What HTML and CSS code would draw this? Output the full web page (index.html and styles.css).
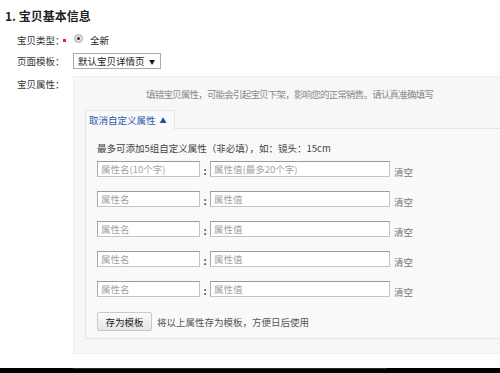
FILE: index.html
```html
<!DOCTYPE html>
<html lang="zh-CN">
<head>
<meta charset="utf-8">
<title>宝贝基本信息</title>
<link rel="stylesheet" href="styles.css">
</head>
<body>
<div class="page">
  <h1 class="title">1. 宝贝基本信息</h1>
  <div class="row row-type">
    <span class="label">宝贝类型：</span>
    <span class="req"></span>
    <span class="radio"><span class="radio-dot"></span></span>
    <span class="radio-text">全新</span>
  </div>
  <div class="row row-tpl">
    <span class="label">页面模板：</span>
    <span class="select"><span class="select-text">默认宝贝详情页</span><span class="select-arrow">▼</span></span>
  </div>
  <div class="row row-attr">
    <span class="label label-top">宝贝属性：</span>
    <div class="attr-box">
      <p class="warn">填错宝贝属性，可能会引起宝贝下架，影响您的正常销售。请认真准确填写</p>
      <div class="tab"><span class="tab-link">取消自定义属性</span><span class="tab-arrow">▲</span></div>
      <div class="custom">
        <p class="hint">最多可添加5组自定义属性（非必填），如：镜头：15cm</p>
        <div class="pair">
          <span class="inp inp-name">属性名(10个字)</span><span class="colon">:</span><span class="inp inp-val">属性值(最多20个字)</span><span class="clear">清空</span>
        </div>
        <div class="pair">
          <span class="inp inp-name">属性名</span><span class="colon">:</span><span class="inp inp-val">属性值</span><span class="clear">清空</span>
        </div>
        <div class="pair">
          <span class="inp inp-name">属性名</span><span class="colon">:</span><span class="inp inp-val">属性值</span><span class="clear">清空</span>
        </div>
        <div class="pair">
          <span class="inp inp-name">属性名</span><span class="colon">:</span><span class="inp inp-val">属性值</span><span class="clear">清空</span>
        </div>
        <div class="pair">
          <span class="inp inp-name">属性名</span><span class="colon">:</span><span class="inp inp-val">属性值</span><span class="clear">清空</span>
        </div>
        <div class="save">
          <span class="btn">存为模板</span><span class="save-text">将以上属性存为模板，方便日后使用</span>
        </div>
      </div>
    </div>
  </div>
</div>
<div class="bottom-bar"><div class="bar-line"></div></div>
</body>
</html>
```

FILE: styles.css
```css
html, body {
  margin: 0;
  padding: 0;
  width: 500px;
  height: 373px;
  overflow: hidden;
  background: #fff;
  font-family: "Noto Sans CJK SC", "Noto Sans", sans-serif;
  font-size: 9.5px;
  color: #333;
}
.page {
  height: 368px;
  overflow: hidden;
}
.title {
  margin: 8px 0 0 5px;
  font-size: 12px;
  line-height: 16px;
  font-weight: bold;
  color: #222;
}
.row {
  display: flex;
  align-items: center;
  padding-left: 17px;
}
.label {
  flex: none;
  width: 47px;
  line-height: 12px;
  color: #333;
  white-space: nowrap;
}
.row-type {
  margin-top: 6px;
  height: 20px;
}
.row-type .label {
  width: 46px;
}
.req {
  width: 3px;
  height: 3px;
  background: #f01c24;
  flex: none;
  margin-top: 1px;
}
.radio {
  width: 7px;
  height: 7px;
  border: 1px solid #a8a8a8;
  border-radius: 50%;
  background: radial-gradient(circle, #eee 0, #d6d6d6 100%);
  margin-left: 8px;
  margin-top: -4px;
  display: flex;
  align-items: center;
  justify-content: center;
  flex: none;
}
.radio-dot {
  width: 3px;
  height: 3px;
  border-radius: 50%;
  background: #333;
}
.radio-text {
  margin-left: 7px;
  color: #222;
}
.row-tpl {
  margin-top: 2px;
  height: 18px;
}
.row-tpl .label {
  width: 56px;
}
.select {
  flex: none;
  box-sizing: border-box;
  width: 88px;
  height: 16px;
  border: 1px solid #a9a9a9;
  background: #fff;
  display: flex;
  align-items: center;
  justify-content: space-between;
  padding: 0 5px 0 4px;
  color: #222;
}
.select-arrow {
  font-size: 6px;
  color: #111;
}
.row-attr {
  margin-top: 6px;
  align-items: flex-start;
}
.row-attr .label {
  width: 56px;
}
.label-top {
  padding-top: 2px;
}
.attr-box {
  flex: none;
  width: 440px;
  box-sizing: border-box;
  background: #f7f7f7;
  border: 1px solid #efefef;
  border-right: none;
  padding: 0 0 14px 11px;
}
.warn {
  margin: 0;
  padding: 11px 0 0 61px;
  line-height: 12px;
  color: #8a8a8a;
  letter-spacing: -0.8px;
  white-space: nowrap;
}
.tab {
  margin-top: 10px;
  width: 90px;
  height: 19px;
  box-sizing: border-box;
  border: 1px solid #e6e6e6;
  border-bottom: none;
  background: #f9f9f9;
  display: flex;
  align-items: center;
  padding-left: 3px;
  position: relative;
  margin-bottom: -1px;
  z-index: 1;
}
.tab-link {
  color: #2a5caa;
}
.tab-arrow {
  color: #1e4f9e;
  font-size: 7px;
  margin-left: 4px;
}
.custom {
  border: 1px solid #e6e6e6;
  border-right: none;
  background: #f9f9f9;
  padding: 13px 0 7px 11px;
}
.hint {
  margin: 0;
  line-height: 12px;
  color: #444;
  white-space: nowrap;
}
.pair {
  display: flex;
  align-items: center;
  height: 16px;
  margin-bottom: 14px;
}
.pair:first-of-type {
  margin-top: 7px;
}
.inp {
  flex: none;
  box-sizing: border-box;
  height: 16px;
  background: #fff;
  border: 1px solid #c4c4c4;
  border-top-color: #9a9a9a;
  border-left-color: #aaa;
  color: #a3a3a3;
  line-height: 14px;
  padding-left: 3px;
  white-space: nowrap;
}
.inp-name {
  width: 103px;
}
.inp-val {
  width: 180px;
}
.colon {
  flex: none;
  width: 10px;
  text-align: center;
  font-weight: bold;
  color: #111;
  padding-top: 3px;
}
.clear {
  margin-left: 4px;
  padding-top: 5px;
  color: #777;
}
.save {
  display: flex;
  align-items: center;
  margin-top: 15px;
}
.btn {
  flex: none;
  box-sizing: border-box;
  width: 55px;
  height: 19px;
  border: 1px solid #c8c8c8;
  border-radius: 2px;
  background: linear-gradient(#fbfbfb, #e6e6e6);
  display: flex;
  align-items: center;
  justify-content: center;
  color: #222;
}
.save-text {
  margin-left: 5px;
  color: #555;
}
.bottom-bar {
  height: 5px;
  background: #000;
}
.bar-line {
  margin-left: 73px;
  width: 314px;
  height: 1px;
  background: #2a2a2a;
}
```
